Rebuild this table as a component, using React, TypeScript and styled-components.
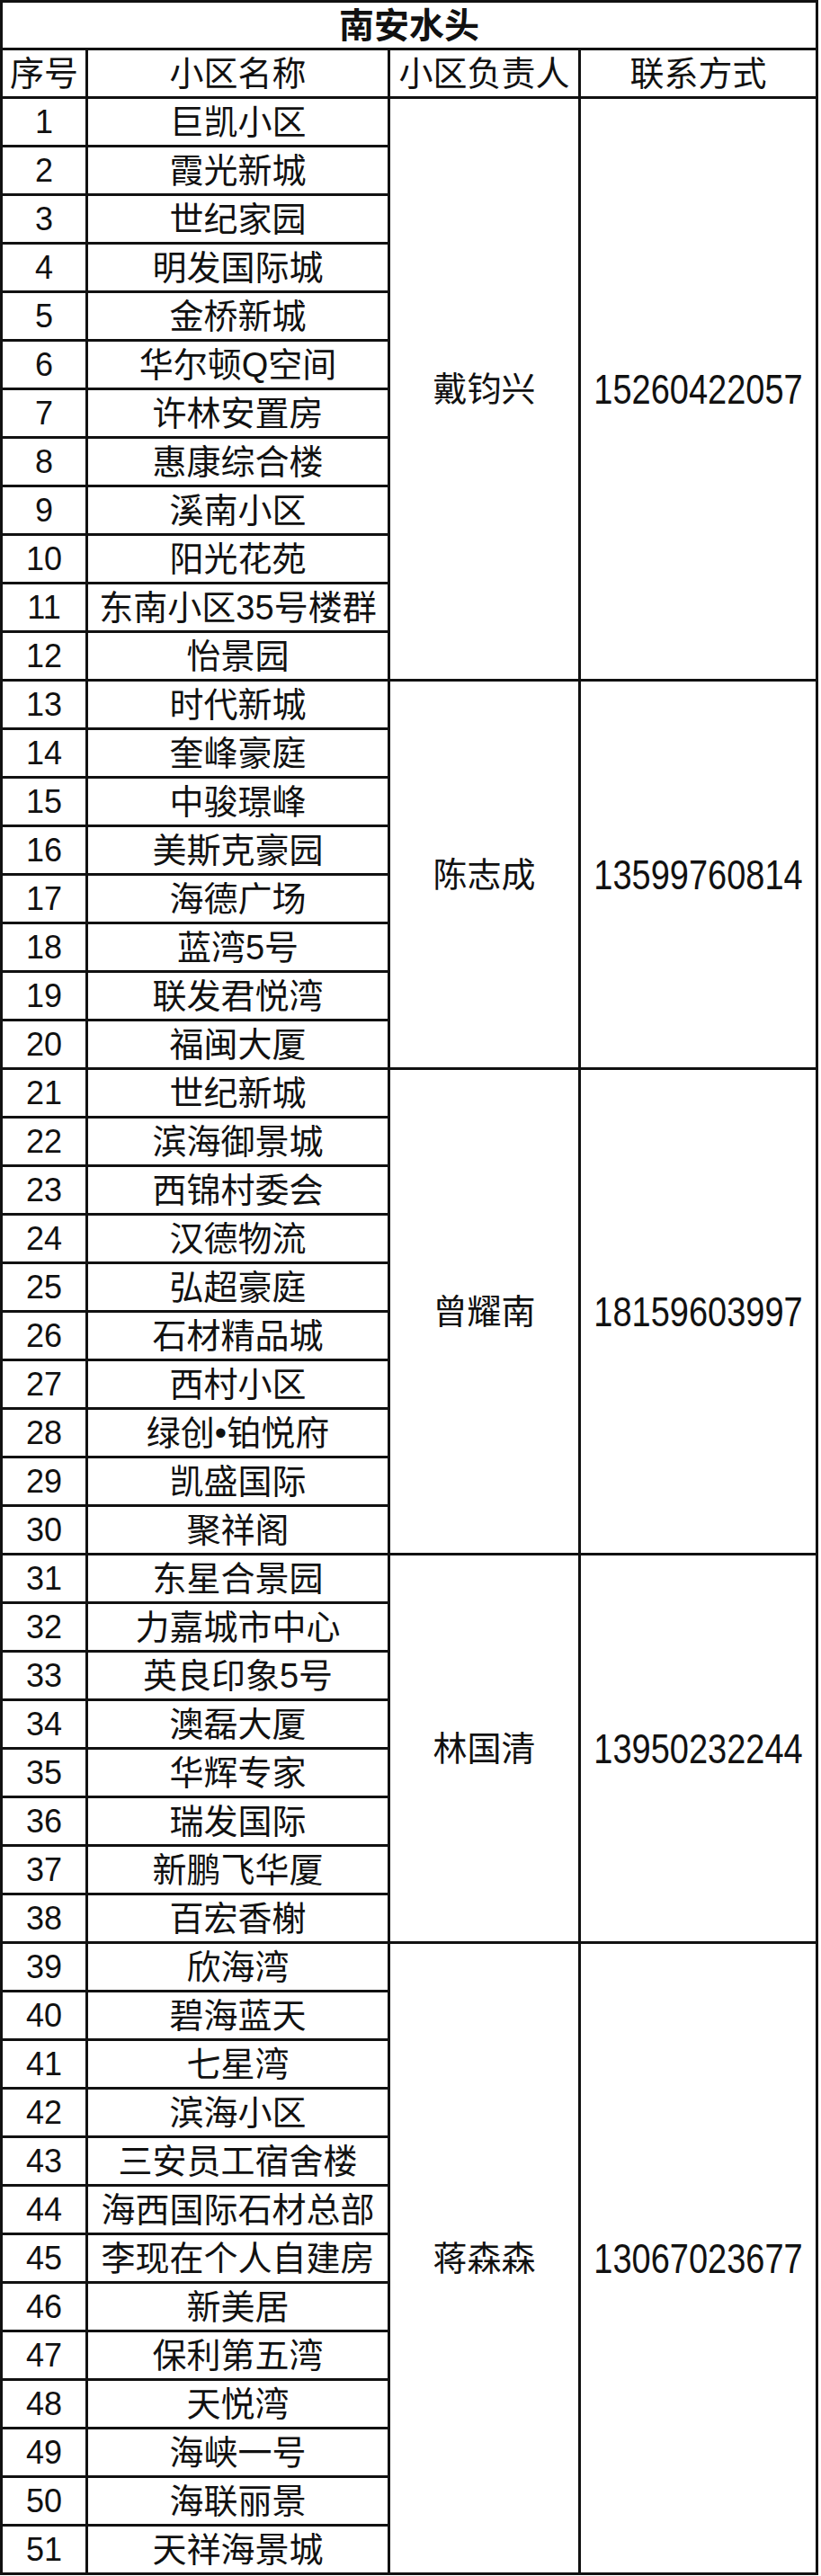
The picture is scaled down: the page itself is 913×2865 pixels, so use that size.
import { createGlobalStyle } from 'styled-components';
import styled from 'styled-components';

type Group = {
  manager: string;
  phone: string;
  places: string[];
};

const groups: Group[] = [
  {
    manager: '戴钧兴',
    phone: '15260422057',
    places: [
      '巨凯小区',
      '霞光新城',
      '世纪家园',
      '明发国际城',
      '金桥新城',
      '华尔顿Q空间',
      '许林安置房',
      '惠康综合楼',
      '溪南小区',
      '阳光花苑',
      '东南小区35号楼群',
      '怡景园',
    ],
  },
  {
    manager: '陈志成',
    phone: '13599760814',
    places: ['时代新城', '奎峰豪庭', '中骏璟峰', '美斯克豪园', '海德广场', '蓝湾5号', '联发君悦湾', '福闽大厦'],
  },
  {
    manager: '曾耀南',
    phone: '18159603997',
    places: [
      '世纪新城',
      '滨海御景城',
      '西锦村委会',
      '汉德物流',
      '弘超豪庭',
      '石材精品城',
      '西村小区',
      '绿创•铂悦府',
      '凯盛国际',
      '聚祥阁',
    ],
  },
  {
    manager: '林国清',
    phone: '13950232244',
    places: ['东星合景园', '力嘉城市中心', '英良印象5号', '澳磊大厦', '华辉专家', '瑞发国际', '新鹏飞华厦', '百宏香榭'],
  },
  {
    manager: '蒋森森',
    phone: '13067023677',
    places: [
      '欣海湾',
      '碧海蓝天',
      '七星湾',
      '滨海小区',
      '三安员工宿舍楼',
      '海西国际石材总部',
      '李现在个人自建房',
      '新美居',
      '保利第五湾',
      '天悦湾',
      '海峡一号',
      '海联丽景',
      '天祥海景城',
    ],
  },
];

const GlobalStyle = createGlobalStyle`
  html, body {
    margin: 0;
    padding: 0;
    background: #ffffff;
  }
  body {
    font-family: "Liberation Sans", "Noto Sans CJK SC", sans-serif;
    color: #111111;
  }
`;

const Sheet = styled.div`
  display: grid;
  width: 910px;
  box-sizing: border-box;
  grid-template-columns: 95px 336px 212px 264px;
  grid-template-rows: 53px 54px;
  grid-auto-rows: 54px;
  border-left: 3px solid #111;
  border-top: 3px solid #111;
`;

const Cell = styled.div<{ $row?: number; $span?: number; $col?: number }>`
  box-sizing: border-box;
  display: flex;
  align-items: center;
  justify-content: center;
  border-right: 3px solid #111;
  border-bottom: 3px solid #111;
  font-size: 38px;
  line-height: 1;
  white-space: nowrap;
  overflow: hidden;
  ${({ $row, $span }) => ($row ? `grid-row: ${$row} / span ${$span ?? 1};` : '')}
  ${({ $col }) => ($col ? `grid-column: ${$col};` : '')}
`;

const TitleCell = styled(Cell)`
  grid-column: 1 / span 4;
  font-size: 39px;
  font-weight: bold;
`;

const NumberCell = styled(Cell)`
  font-size: 36px;
`;

const PhoneText = styled.span`
  display: inline-block;
  font-size: 38px;
  transform: scaleY(1.2);
`;

export default function App() {
  let index = 0;
  let row = 3;

  return (
    <>
      <GlobalStyle />
      <Sheet>
        <TitleCell>南安水头</TitleCell>
        <Cell>序号</Cell>
        <Cell>小区名称</Cell>
        <Cell>小区负责人</Cell>
        <Cell>联系方式</Cell>
        {groups.map((group) => {
          const start = row;
          row += group.places.length;
          return [
            ...group.places.flatMap((place, i) => {
              index += 1;
              return [
                <NumberCell key={`n${index}`} $row={start + i} $col={1}>
                  {index}
                </NumberCell>,
                <Cell key={`p${index}`} $row={start + i} $col={2}>
                  {place}
                </Cell>,
              ];
            }),
            <Cell key={`m${group.manager}`} $row={start} $span={group.places.length} $col={3}>
              {group.manager}
            </Cell>,
            <Cell key={`t${group.phone}`} $row={start} $span={group.places.length} $col={4}>
              <PhoneText>{group.phone}</PhoneText>
            </Cell>,
          ];
        })}
      </Sheet>
    </>
  );
}
